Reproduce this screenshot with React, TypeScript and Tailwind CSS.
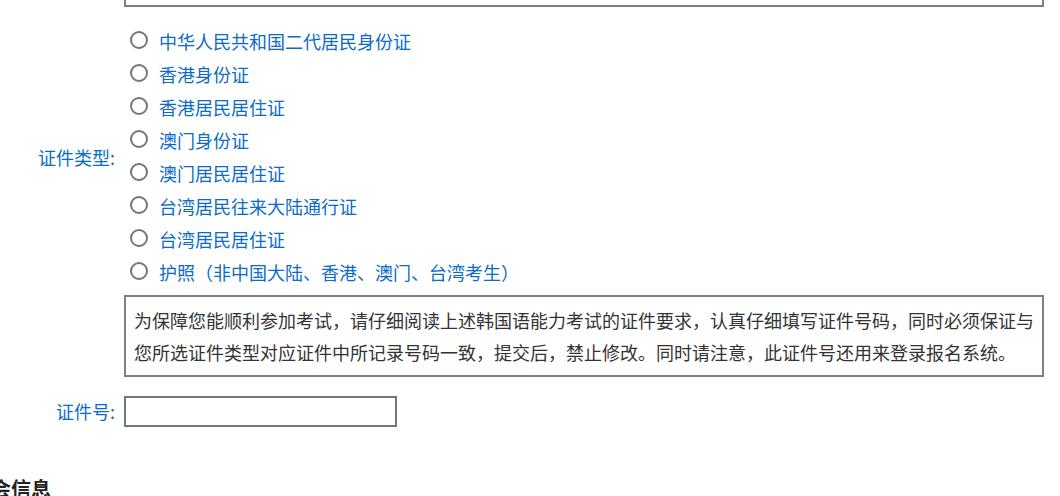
import React from "react";

const options = [
  "中华人民共和国二代居民身份证",
  "香港身份证",
  "香港居民居住证",
  "澳门身份证",
  "澳门居民居住证",
  "台湾居民往来大陆通行证",
  "台湾居民居住证",
  "护照（非中国大陆、香港、澳门、台湾考生）",
];

export default function App() {
  return (
    <div
      className="w-[1060px] h-[496px] overflow-hidden bg-white"
      style={{ fontFamily: '"Noto Sans CJK SC", "Noto Sans", sans-serif' }}
    >
      <div className="grid grid-cols-[124px_920px]">
        {/* top box (cut off) */}
        <div />
        <div className="-mt-[40px] h-[47px] border-2 border-[#808080]" />

        {/* id type */}
        <div className="flex items-center justify-end pr-[9px] pt-[18px] pb-[6px] text-[18px] text-[#0b6bc9]">
          证件类型:
        </div>
        <div className="pt-[18px] pb-[6px]">
          {options.map((o) => (
            <label key={o} className="flex h-[33px] items-center cursor-pointer">
              <span className="ml-[6px] mr-[11px] mb-[3px] box-border h-[18px] w-[18px] rounded-full border-2 border-[#767676] bg-white" />
              <span className="text-[18px] leading-[33px] whitespace-nowrap text-[#0b6bc9]">{o}</span>
            </label>
          ))}
        </div>

        {/* notice */}
        <div />
        <div className="border-2 border-[#808080] pl-[8px] pr-[2px] py-[7px] text-[18px] leading-[32px] text-[#333333]">
          为保障您能顺利参加考试，请仔细阅读上述韩国语能力考试的证件要求，认真仔细填写证件号码，同时必须保证与您所选证件类型对应证件中所记录号码一致，提交后，禁止修改。同时请注意，此证件号还用来登录报名系统。
        </div>

        {/* id number */}
        <div className="flex items-center justify-end pr-[9px] pt-[19px] text-[18px] text-[#0b6bc9]">
          证件号:
        </div>
        <div className="pt-[19px]">
          <input
            type="text"
            className="box-border block h-[31px] w-[273px] border-2 border-[#767676] bg-white px-1 text-[16px] outline-none"
          />
        </div>
      </div>

      <h2 className="-ml-[9px] mt-[48px] text-[20px] font-bold leading-[28px] text-[#222222]">会信息</h2>
    </div>
  );
}
